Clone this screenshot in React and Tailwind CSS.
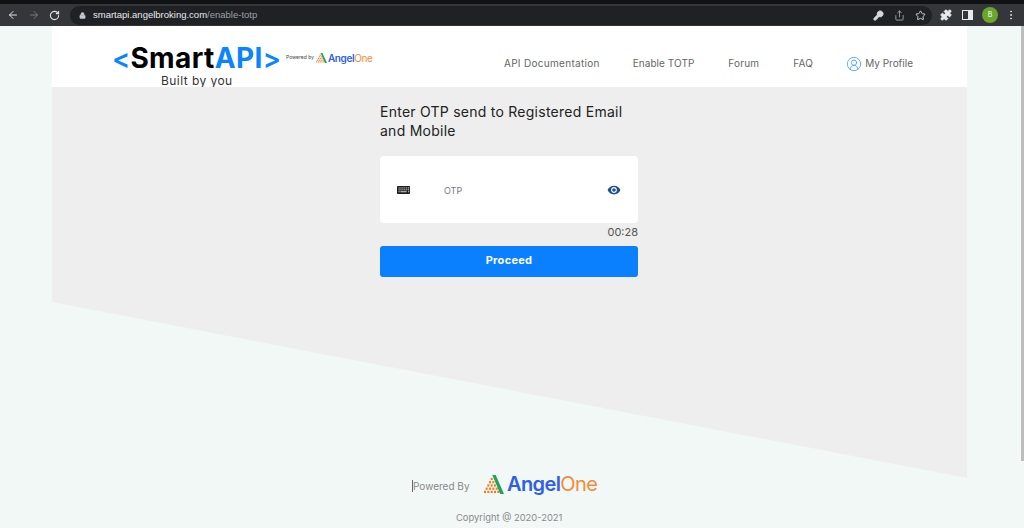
import React from "react";
import { ArrowLeft, ArrowRight, RotateCw, Lock, KeyRound, Share, Star, Puzzle, EllipsisVertical, CircleUserRound } from "lucide-react";

function AngelMark({ w = 20, h = 19 }) {
  const dots = [];
  const rows = [[9],[7,11],[5,9,13],[3,7,11,15],[1,5,9,13,17]];
  rows.forEach((r, i) => r.forEach((x) => dots.push(<rect key={`${i}-${x}`} x={x - 1} y={3 + i * 3.4} width="2.4" height="2.4" fill="#f47a20" />)));
  return (
    <svg width={w} height={h} viewBox="0 0 24 20" preserveAspectRatio="none" className="shrink-0">
      {dots}
      <path d="M10 0h4l10 20h-4.5z" fill="#1fa35a" />
    </svg>
  );
}

function KeyboardIcon() {
  const keys = [];
  for (let r = 0; r < 3; r++) {
    for (let c = 0; c < 6; c++) {
      if (r === 2 && c > 0 && c < 5) continue;
      keys.push(<rect key={`${r}-${c}`} x={1.5 + c * 1.9} y={1.3 + r * 1.9} width="1.2" height="1.2" fill="#b9b9b9" />);
    }
  }
  return (
    <svg width="13" height="8" viewBox="0 0 13 8" className="shrink-0">
      <rect width="13" height="8" rx="0.8" fill="#1c1c1c" />
      {keys}
      <rect x="3.4" y="5.1" width="6.2" height="1.2" fill="#b9b9b9" />
    </svg>
  );
}

function EyeIcon() {
  return (
    <svg width="14" height="14" viewBox="0 0 24 24" className="ml-auto shrink-0">
      <path fill="#1d4f91" d="M12 4.5C7 4.5 2.73 7.61 1 12c1.73 4.39 6 7.5 11 7.5s9.27-3.11 11-7.5c-1.73-4.39-6-7.5-11-7.5zM12 17c-2.76 0-5-2.24-5-5s2.24-5 5-5 5 2.24 5 5-2.24 5-5 5zm0-8c-1.66 0-3 1.34-3 3s1.34 3 3 3 3-1.34 3-3-1.34-3-3-3z" />
    </svg>
  );
}

function Logo() {
  return (
    <div className="flex flex-col items-start ml-[60px]">
      <div className="flex items-center h-[34px] mt-[15px]">
        <span className="text-[27px] font-semibold text-[#0a84ff] tracking-[0.2px] leading-none">&lt;</span>
        <span className="text-[28px] font-bold text-black tracking-[0.4px] leading-none">Smart</span>
        <span className="text-[28px] font-bold text-[#0a84ff] tracking-[0.4px] leading-none">API</span>
        <span className="text-[27px] font-semibold text-[#0a84ff] leading-none">&gt;</span>
        <span className="text-[5px] text-[#444] ml-[5px] whitespace-nowrap">Powered by</span>
        <span className="ml-[2px] mr-[1px] flex"><AngelMark w={11} h={10} /></span>
        <span className="text-[10px] font-semibold tracking-[-0.4px] text-[#2f5fe8]">Angel</span>
        <span className="text-[10px] tracking-[-0.4px] text-[#f58a3a]">One</span>
      </div>
      <div className="text-[12px] text-[#333] ml-[49px] -mt-[1px] tracking-[0.45px] leading-[14px]">Built by you</div>
    </div>
  );
}

export default function App() {
  return (
    <div className="relative h-[528px] w-[1024px] overflow-hidden bg-[#f2f8f6] font-['Inter','Open_Sans',sans-serif]">
      <div className="h-[26px] bg-[#35363a] border-t-[4px] border-[#111214] flex items-center text-[#dee1e6]">
        <div className="flex items-center w-[70px] pl-[7px] gap-[9px] shrink-0">
          <ArrowLeft size={12} strokeWidth={2} />
          <ArrowRight size={12} strokeWidth={2} className="text-[#77787c]" />
          <RotateCw size={11} strokeWidth={2.4} />
        </div>
        <div className="w-[862px] h-[19px] rounded-full bg-[#202124] flex items-center pl-[9px] pr-[6px] shrink-0">
          <Lock size={7} fill="#c4c7cc" className="text-[#c4c7cc]" />
          <span className="ml-[7px] text-[9.5px] text-[#e8eaed] font-['Liberation_Sans',sans-serif]">smartapi.angelbroking.com<span className="text-[#9aa0a6]">/enable-totp</span></span>
          <div className="ml-auto flex items-center gap-[10px] text-[#d6d8dc]">
            <KeyRound size={11} fill="#d6d8dc" />
            <Share size={11} className="text-[#9ea2a8]" />
            <Star size={11} />
          </div>
        </div>
        <div className="flex items-center ml-[8px] shrink-0">
          <Puzzle size={12} fill="#e8eaed" className="text-[#e8eaed] shrink-0" />
          <span className="ml-[10px] w-[11px] h-[10px] border-[1.5px] border-[#e8eaed] border-r-[5px] shrink-0" />
          <span className="ml-[9px] w-[16px] h-[16px] rounded-full bg-[#6aa52e] text-white text-[7px] flex items-center justify-center shrink-0">B</span>
          <EllipsisVertical size={12} className="ml-[7px] shrink-0" />
        </div>
      </div>

      <div className="w-[915px] ml-[52px]">
        <header className="h-[61px] bg-white flex items-start">
          <Logo />
          <nav className="ml-auto flex items-center h-[33px] mt-[21px] text-[10px] text-[#666] mr-[54px]">
            <span className="tracking-[0.3px]">API Documentation</span>
            <span className="ml-[33px] tracking-[0.05px]">Enable TOTP</span>
            <span className="ml-[34px] tracking-[0.2px]">Forum</span>
            <span className="ml-[34px] tracking-[0.2px]">FAQ</span>
            <span className="ml-[33px] flex items-center gap-[3px]">
              <CircleUserRound size={16} strokeWidth={1.3} className="text-[#4aa3f5]" />
              My Profile
            </span>
          </nav>
        </header>

        <main className="h-[391px] bg-[#eeeeee] [clip-path:polygon(0_0,100%_0,100%_100%,0_55%)] pt-[15px] pl-[328px]">
          <div className="w-[258px]">
            <h1 className="text-[14px] font-normal leading-[19px] text-[#222] tracking-[0.25px]">Enter OTP send to Registered Email and Mobile</h1>
            <div className="mt-[16px] h-[67px] rounded-[4px] bg-white flex items-center pl-[17px] pr-[17px]">
              <KeyboardIcon />
              <span className="ml-[34px] mt-[2px] text-[9px] text-[#76767e]">OTP</span>
              <EyeIcon />
            </div>
            <div className="text-right text-[11px] leading-[18px] text-[#555]">00:28</div>
            <button className="mt-[5px] w-full h-[31px] pb-[3px] rounded-[3px] bg-[#0a80ff] text-white text-[11px] font-bold tracking-[0.3px]">Proceed</button>
          </div>
        </main>
      </div>

      <footer className="flex flex-col items-start pl-[412px]">
        <div className="flex items-center h-[34px] mt-[-9px]">
          <span className="w-px h-[12px] bg-[#666]" />
          <span className="text-[10px] text-[#888] w-[71px]">Powered By</span>
          <span className="-mt-[4px]"><AngelMark w={20} h={19} /></span>
          <span className="ml-[3px] -mt-[4px] text-[20px] font-semibold tracking-[-0.6px] text-[#2f5fe8] leading-none">Angel</span>
          <span className="-mt-[4px] text-[20px] tracking-[-0.6px] text-[#f58a3a] leading-none">One</span>
        </div>
        <div className="ml-[44px] mt-[8px] text-[9.4px] text-[#8a8a8a]">Copyright @ 2020-2021</div>
      </footer>

      <div className="absolute right-0 top-[26px] h-[435px] w-[3px] bg-[#bdbdbd]" />
    </div>
  );
}
